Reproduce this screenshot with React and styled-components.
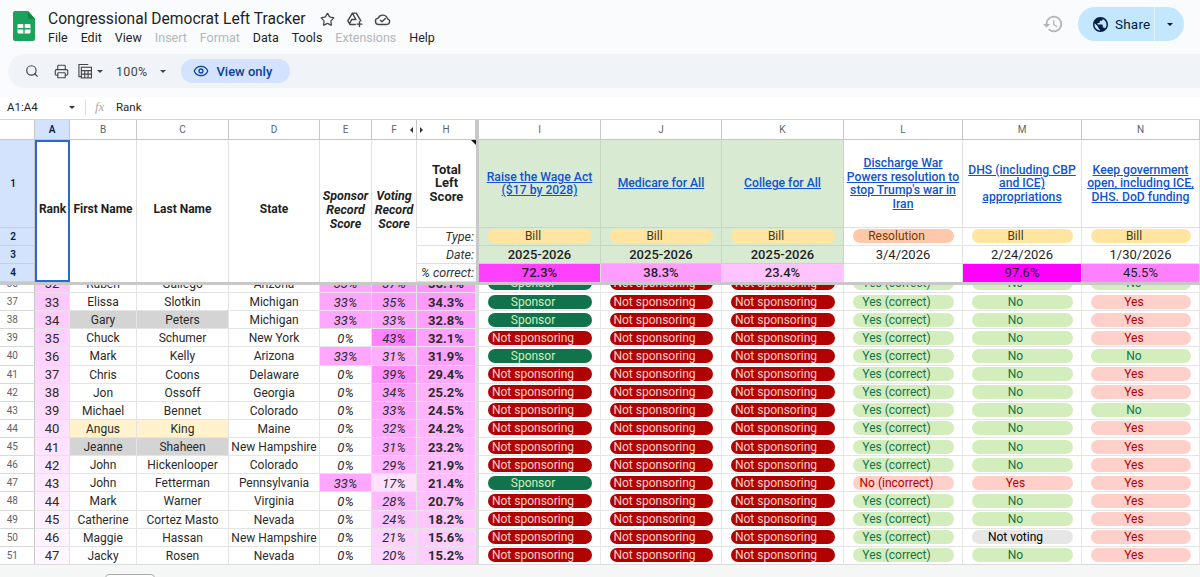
import React from "react";
import styled, { createGlobalStyle } from "styled-components";
import { Search, Printer, Eye, Star } from "lucide-react";

const Global = createGlobalStyle`
  html, body { margin: 0; padding: 0; background: #f9fbfd; }
  body { font-family: "Roboto", "Liberation Sans", sans-serif; }
  * { box-sizing: border-box; }
`;

const COLS = "35px 35px 67px 92px 91px 52px 45px 59px 3px 122px 121px 122px 119px 119px 118px";

const Page = styled.div`
  width: 1200px;
  height: 577px;
  overflow: hidden;
  display: flex;
  flex-direction: column;
  background: #f9fbfd;
`;

const TopBar = styled.header`
  height: 54px;
  display: flex;
  align-items: flex-start;
  padding: 11px 16px 0 13px;
`;
const Logo = styled.svg`
  width: 22px;
  height: 30px;
  flex: none;
  margin-right: 13px;
`;
const TitleBlock = styled.div`
  display: flex;
  flex-direction: column;
  flex: 1;
`;
const TitleRow = styled.div`
  display: flex;
  align-items: center;
  height: 16px;
  color: #1f1f1f;
`;
const Title = styled.div`
  font: 400 15.6px/16px "Roboto", sans-serif;
  margin-right: 15px;
`;
const TitleIcons = styled.div`
  display: flex;
  align-items: center;
  gap: 11px;
  color: #444746;
`;
const Menu = styled.nav`
  display: flex;
  gap: 13px;
  margin-top: 2px;
  font: 400 12.5px/17px "Roboto", sans-serif;
`;
const MenuItem = styled.span`
  color: ${(p) => (p.$off ? "#b3b6ba" : "#1f1f1f")};
`;
const HistoryIcon = styled.svg`
  width: 22px;
  height: 22px;
  fill: #b4b4b4;
  margin: 2px 14px 0 0;
`;
const Share = styled.div`
  width: 106px;
  height: 34px;
  margin-top: -4px;
  border-radius: 17px;
  background: #c2e7ff;
  color: #001d35;
  display: flex;
  align-items: center;
  font: 400 13.5px "Roboto", sans-serif;
  letter-spacing: 0.2px;
`;
const ShareMain = styled.div`
  width: 77px;
  height: 100%;
  display: flex;
  align-items: center;
  gap: 7px;
  padding-left: 15px;
  border-right: 1px solid #e4f4ff;
`;
const ShareCaret = styled.div`
  flex: 1;
  display: flex;
  justify-content: center;
`;
const Caret = styled.span`
  display: inline-block;
  width: 0;
  height: 0;
  border-left: 3.5px solid transparent;
  border-right: 3.5px solid transparent;
  border-top: 3.5px solid ${(p) => p.$c || "#444746"};
`;

const Toolbar = styled.div`
  height: 34px;
  margin-left: 8px;
  background: #f0f4f9;
  border-radius: 17px 0 0 17px;
  display: flex;
  align-items: center;
  color: #444746;
  padding-left: 17px;
`;
const ZoomText = styled.span`
  font: 400 12.5px "Roboto", sans-serif;
  letter-spacing: 0.3px;
  margin: 0 13px 0 6px;
`;
const ViewOnly = styled.div`
  width: 109px;
  height: 24px;
  margin-left: 15px;
  border-radius: 12px;
  background: #d3e3fd;
  color: #0842a0;
  display: flex;
  align-items: center;
  gap: 7px;
  padding-left: 12px;
  font: 500 13px "Roboto", sans-serif;
`;
const Spaced = styled.span`
  display: inline-flex;
  margin-right: ${(p) => p.$mr}px;
`;

const FormulaBar = styled.div`
  height: 22px;
  margin-top: 9px;
  padding-bottom: 2px;
  background: #fff;
  display: flex;
  align-items: center;
  font: 400 11.5px "Roboto", sans-serif;
  color: #1f1f1f;
`;
const NameBox = styled.div`
  width: 86px;
  height: 16px;
  display: flex;
  align-items: center;
  justify-content: space-between;
  padding: 0 10px 0 7px;
  border-right: 1px solid #dfe1e5;
`;
const Fx = styled.span`
  font: italic 400 13px "Liberation Serif", serif;
  color: #a9acaf;
  width: 30px;
  padding-left: 9px;
`;

const Frozen = styled.div`
  display: grid;
  grid-template-columns: ${COLS};
  grid-template-rows: 20px 87.7px 18px 18px 18px;
  background: #fff;
  border-top: 1px solid #d4d4d4;
  flex: none;
`;
const FreezeBarV = styled.div`
  grid-column: 9;
  grid-row: 1 / -1;
  background: #c8c8c8;
`;
const FreezeBarH = styled.div`
  height: 3px;
  background: #c8c8c8;
  flex: none;
`;
const ColHead = styled.div`
  position: relative;
  display: flex;
  align-items: center;
  justify-content: center;
  font: ${(p) => (p.$on ? 600 : 400)} 10px "Roboto", sans-serif;
  color: ${(p) => (p.$on ? "#041e49" : "#5f6368")};
  background: ${(p) => (p.$on ? "#d3e3fd" : "#fff")};
  border-right: 1px solid #c7c7c7;
  border-bottom: 1px solid #c7c7c7;
`;
const Arrow = styled.span`
  position: absolute;
  top: 7px;
  ${(p) => p.$side}: 0;
  width: 0;
  height: 0;
  border-top: 3px solid transparent;
  border-bottom: 3px solid transparent;
  ${(p) => (p.$side === "right" ? "border-right" : "border-left")}: 3px solid #333;
  margin-${(p) => p.$side}: 3px;
`;
const RowHead = styled.div`
  display: flex;
  align-items: center;
  justify-content: flex-end;
  padding-right: 18px;
  font: ${(p) => (p.$on ? 600 : 400)} 10px "Roboto", sans-serif;
  color: ${(p) => (p.$on ? "#041e49" : "#5f6368")};
  background: ${(p) => (p.$on ? "#d3e3fd" : "#fff")};
  border-right: 1px solid #c7c7c7;
  border-bottom: 1px solid ${(p) => (p.$on ? "#c4cfdf" : "#d8d8d8")};
`;
const Merged = styled.div`
  grid-row: span 4;
  display: flex;
  align-items: center;
  justify-content: center;
  text-align: center;
  padding: 0 1px 2px;
  font-size: ${(p) => (p.$it ? 12.5 : 12)}px;
  line-height: 13.7px;
  font-weight: 700;
  font-style: ${(p) => (p.$it ? "italic" : "normal")};
  color: #1f1f1f;
  background: #fff;
  border-right: 1px solid #e0e0e0;
`;
const Selected = styled(Merged)`
  border: 2px solid #2a68d0;
`;
const HeadTotal = styled.div`
  position: relative;
  display: flex;
  align-items: center;
  justify-content: center;
  text-align: center;
  padding: 0 12px;
  font-size: 13px;
  line-height: 13.8px;
  font-weight: 700;
  color: #1f1f1f;
  border-bottom: 1px solid #e0e0e0;
`;
const Notch = styled.span`
  position: absolute;
  top: 0;
  right: 0;
  width: 0;
  height: 0;
  border-top: 5px solid #111;
  border-left: 5px solid transparent;
`;
const Label = styled.div`
  display: flex;
  align-items: center;
  justify-content: flex-end;
  padding-right: 2px;
  font-size: 12.5px;
  font-style: italic;
  color: #333;
  border-bottom: 1px solid #e0e0e0;
`;
const Issue = styled.a`
  display: flex;
  align-items: center;
  justify-content: center;
  text-align: center;
  padding: 2px 2px 0;
  font-size: 12.2px;
  line-height: 13.7px;
  font-weight: 500;
  color: #1155cc;
  text-decoration: underline;
  background: ${(p) => (p.$g ? "#d9ead3" : "#fff")};
  border-right: 1px solid ${(p) => (p.$g ? "#c6d6c1" : "#e0e0e0")};
  border-bottom: 1px solid ${(p) => (p.$g ? "#c6d6c1" : "#e0e0e0")};
`;
const DateCell = styled.div`
  display: flex;
  align-items: center;
  justify-content: center;
  font-size: 13px;
  font-weight: ${(p) => (p.$g ? 500 : 400)};
  color: #1f1f1f;
  background: ${(p) => (p.$g ? "#d9ead3" : "#fff")};
  border-right: 1px solid ${(p) => (p.$g ? "#c6d6c1" : "#e0e0e0")};
  border-bottom: 1px solid ${(p) => (p.$g ? "#c6d6c1" : "#e0e0e0")};
`;
const PctCell = styled.div`
  display: flex;
  align-items: center;
  justify-content: center;
  font-size: 13px;
  font-weight: ${(p) => (p.$b ? 500 : 400)};
  color: #1f1f1f;
  background: ${(p) => p.$bg};
  border-right: 1px solid #e0e0e0;
`;

const ChipCell = styled.div`
  display: flex;
  align-items: center;
  padding: 0 8px 0 9px;
  background: ${(p) => (p.$g ? "#d9ead3" : "#fff")};
  border-right: 1px solid ${(p) => (p.$g ? "#c6d6c1" : "#e8e8e8")};
  border-bottom: 1px solid ${(p) => (p.$g ? "#c6d6c1" : "#e4e4e4")};
`;
const CHIP = {
  sponsor: ["#11734b", "#d4edbc"],
  not: ["#b10202", "#ffcfc9"],
  good: ["#d4edbc", "#11734b"],
  bad: ["#ffcfc9", "#b10202"],
  none: ["#e6e6e6", "#000"],
  bill: ["#ffe5a0", "#473821"],
  res: ["#ffc8aa", "#753800"],
};
const Chip = styled.span`
  flex: 1;
  height: 14px;
  border-radius: 7px;
  padding: 0 14px 0 0;
  display: block;
  text-align: center;
  white-space: nowrap;
  font-size: 12px;
  line-height: 14px;
  background: ${(p) => CHIP[p.$k][0]};
  color: ${(p) => CHIP[p.$k][1]};
`;

const Viewport = styled.div`
  flex: 1;
  min-height: 0;
  overflow: hidden;
  background: #fff;
`;
const BodyGrid = styled.div`
  display: grid;
  grid-template-columns: ${COLS};
  grid-auto-rows: 18.13px;
  margin-top: -9.8px;
`;
const BodyRowHead = styled.div`
  display: flex;
  align-items: center;
  justify-content: flex-end;
  padding-right: 16px;
  font: 400 10px "Roboto", sans-serif;
  color: #5f6368;
  border-right: 1px solid #c7c7c7;
  border-bottom: 1px solid #d8d8d8;
`;
const BodyCell = styled.div`
  display: flex;
  align-items: center;
  justify-content: center;
  white-space: nowrap;
  overflow: hidden;
  font-size: ${(p) => p.$size || 13}px;
  padding-top: 1px;
  color: #2a2a2a;
  font-style: ${(p) => (p.$it ? "italic" : "normal")};
  font-weight: ${(p) => (p.$b ? 700 : 400)};
  background: ${(p) => p.$bg || "#fff"};
  border-right: 1px solid #e4e4e4;
  border-bottom: 1px solid #e4e4e4;
`;
const BodyBar = styled.div`
  background: #dcdcdc;
`;
const Footer = styled.div`
  height: 13px;
  flex: none;
  background: #f5f7f6;
  border-top: 1px solid #dcdcdc;
  padding: 9px 0 0 105px;
`;
const SheetTab = styled.div`
  width: 50px;
  height: 10px;
  border: 1px solid #a8a8a8;
  border-radius: 4px 4px 0 0;
  background: #fff;
`;

const heat = (g) => `rgb(255, ${Math.round(g)}, 255)`;
const rankBg = (r) => heat(198 + (r - 32) * 3.2);
const scoreBg = (v) => (v === 0 ? "#fff" : heat(Math.min(240, 287 - 3.65 * v)));
const totalBg = (v) => heat(150 + (36.1 - v) * 2.7);

const GREY = "#d4d4d4";
const YEL = "#fff2cc";
const ROWS = [
  [36, 32, "Ruben", "Gallego", "Arizona", 33, 37, 36.1, "S", "Y", "No", "No"],
  [37, 33, "Elissa", "Slotkin", "Michigan", 33, 35, 34.3, "S", "Y", "No", "Yes"],
  [38, 34, "Gary", "Peters", "Michigan", 33, 33, 32.8, "S", "Y", "No", "Yes", GREY],
  [39, 35, "Chuck", "Schumer", "New York", 0, 43, 32.1, "N", "Y", "No", "Yes"],
  [40, 36, "Mark", "Kelly", "Arizona", 33, 31, 31.9, "S", "Y", "No", "No"],
  [41, 37, "Chris", "Coons", "Delaware", 0, 39, 29.4, "N", "Y", "No", "Yes"],
  [42, 38, "Jon", "Ossoff", "Georgia", 0, 34, 25.2, "N", "Y", "No", "Yes"],
  [43, 39, "Michael", "Bennet", "Colorado", 0, 33, 24.5, "N", "Y", "No", "No"],
  [44, 40, "Angus", "King", "Maine", 0, 32, 24.2, "N", "Y", "No", "Yes", YEL],
  [45, 41, "Jeanne", "Shaheen", "New Hampshire", 0, 31, 23.2, "N", "Y", "No", "Yes", GREY],
  [46, 42, "John", "Hickenlooper", "Colorado", 0, 29, 21.9, "N", "Y", "No", "Yes"],
  [47, 43, "John", "Fetterman", "Pennsylvania", 33, 17, 21.4, "S", "X", "Yes", "Yes"],
  [48, 44, "Mark", "Warner", "Virginia", 0, 28, 20.7, "N", "Y", "No", "Yes"],
  [49, 45, "Catherine", "Cortez Masto", "Nevada", 0, 24, 18.2, "N", "Y", "No", "Yes"],
  [50, 46, "Maggie", "Hassan", "New Hampshire", 0, 21, 15.6, "N", "Y", "Not voting", "Yes"],
  [51, 47, "Jacky", "Rosen", "Nevada", 0, 20, 15.2, "N", "Y", "No", "Yes"],
];

const voteKind = (v) => (v === "No" ? "good" : v === "Yes" ? "bad" : "none");
const taxKind = (v) => (v === "No" ? "good" : "bad");

const ISSUES = [
  { t: "Raise the Wage Act ($17 by 2028)", g: true, type: "Bill", date: "2025-2026", pct: "72.3%", bg: "#ff40ff", b: true },
  { t: "Medicare for All", g: true, type: "Bill", date: "2025-2026", pct: "38.3%", bg: "#ff9dff", b: true },
  { t: "College for All", g: true, type: "Bill", date: "2025-2026", pct: "23.4%", bg: "#ffc4ff", b: true },
  { t: "Discharge War Powers resolution to stop Trump's war in Iran", type: "Resolution", date: "3/4/2026", pct: "", bg: "#fff" },
  { t: "DHS (including CBP and ICE) appropriations", type: "Bill", date: "2/24/2026", pct: "97.6%", bg: "#ff00ff" },
  { t: "Keep government open, including ICE, DHS. DoD funding", type: "Bill", date: "1/30/2026", pct: "45.5%", bg: "#ff80ff" },
];

const SheetsLogo = () => (
  <Logo viewBox="0 0 22 30">
    <path d="M2 0h13l7 8v20a2 2 0 0 1-2 2H2a2 2 0 0 1-2-2V2a2 2 0 0 1 2-2z" fill="#1aa35c" />
    <path d="M15 0l7 8h-5a2 2 0 0 1-2-2z" fill="#0e8a48" />
    <rect x="4.5" y="13" width="13" height="9.5" rx="1" fill="#fff" />
    <path d="M11 13v9.5M4.5 17.75h13" stroke="#1aa35c" strokeWidth="1.4" />
  </Logo>
);
const DriveIcon = () => (
  <svg width="17" height="17" viewBox="0 0 24 24" fill="none" stroke="#444746" strokeWidth="2" strokeLinejoin="round" strokeLinecap="round">
    <path d="M9 3h5.5L21 14M13 19H5.5L2.5 14 9 3l5 9H8l-3 6" />
    <path d="M19 15v7M15.5 18.5h7" />
  </svg>
);
const CloudDone = () => (
  <svg width="17" height="17" viewBox="0 0 24 24" fill="none" stroke="#444746" strokeWidth="2" strokeLinejoin="round" strokeLinecap="round">
    <path d="M6.5 19a4.5 4.5 0 0 1-.6-8.96 7 7 0 0 1 13.2 1.1A4 4 0 0 1 18 19z" />
    <path d="M9 13l2.3 2.3L16 10.5" />
  </svg>
);
const CalcIcon = () => (
  <svg width="14" height="16" viewBox="0 0 15 16" fill="none" stroke="#444746" strokeWidth="1.2">
    <path d="M11 1H1v13h3" />
    <rect x="3.6" y="4" width="10.8" height="11.4" />
    <path d="M3.6 7.6h10.8M3.6 11.4h10.8M7.2 7.6v7.8M10.8 7.6v7.8" />
  </svg>
);
const GlobeIcon = () => (
  <svg width="15" height="15" viewBox="2 2 20 20" fill="#041e49">
    <path d="M12 2C6.48 2 2 6.48 2 12s4.48 10 10 10 10-4.48 10-10S17.52 2 12 2zm-1 17.93c-3.95-.49-7-3.85-7-7.93 0-.62.08-1.21.21-1.79L9 15v1c0 1.1.9 2 2 2v1.93zm6.9-2.54c-.26-.81-1-1.39-1.9-1.39h-1v-3c0-.55-.45-1-1-1H8v-2h2c.55 0 1-.45 1-1V7h2c1.1 0 2-.9 2-2v-.41c2.93 1.19 5 4.06 5 7.41 0 2.08-.8 3.97-2.1 5.39z" />
  </svg>
);

export default function App() {
  return (
    <Page>
      <Global />
      <TopBar>
        <SheetsLogo />
        <TitleBlock>
          <TitleRow>
            <Title>Congressional Democrat Left Tracker</Title>
            <TitleIcons>
              <Star size={15} strokeWidth={2} />
              <DriveIcon />
              <CloudDone />
            </TitleIcons>
          </TitleRow>
          <Menu>
            {["File", "Edit", "View"].map((m) => <MenuItem key={m}>{m}</MenuItem>)}
            <MenuItem $off>Insert</MenuItem>
            <MenuItem $off>Format</MenuItem>
            <MenuItem>Data</MenuItem>
            <MenuItem>Tools</MenuItem>
            <MenuItem $off>Extensions</MenuItem>
            <MenuItem>Help</MenuItem>
          </Menu>
        </TitleBlock>
        <HistoryIcon viewBox="0 0 24 24">
          <path d="M13 3c-4.97 0-9 4.03-9 9H1l3.89 3.89.07.14L9 12H6c0-3.87 3.13-7 7-7s7 3.13 7 7-3.13 7-7 7c-1.93 0-3.68-.79-4.94-2.06l-1.42 1.42C8.27 19.99 10.51 21 13 21c4.97 0 9-4.03 9-9s-4.03-9-9-9zm-1 5v5l4.28 2.54.72-1.21-3.5-2.08V8H12z" />
        </HistoryIcon>
        <Share>
          <ShareMain><GlobeIcon />Share</ShareMain>
          <ShareCaret><Caret $c="#001d35" /></ShareCaret>
        </Share>
      </TopBar>

      <Toolbar>
        <Spaced $mr={15}><Search size={14} strokeWidth={2} /></Spaced>
        <Spaced $mr={9}><Printer size={15} strokeWidth={1.8} /></Spaced>
        <Spaced $mr={5}><CalcIcon /></Spaced>
        <Spaced $mr={7}><Caret /></Spaced>
        <ZoomText>100%</ZoomText>
        <Caret />
        <ViewOnly><Eye size={16} strokeWidth={1.9} />View only</ViewOnly>
      </Toolbar>

      <FormulaBar>
        <NameBox>A1:A4<Caret $c="#333" /></NameBox>
        <Fx>fx</Fx>
        Rank
      </FormulaBar>

      <Frozen>
        <FreezeBarV />
        <ColHead />
        <ColHead $on>A</ColHead>
        <ColHead>B</ColHead>
        <ColHead>C</ColHead>
        <ColHead>D</ColHead>
        <ColHead>E</ColHead>
        <ColHead>F<Arrow $side="right" /></ColHead>
        <ColHead>H<Arrow $side="left" /></ColHead>
        {["I", "J", "K", "L", "M", "N"].map((c) => <ColHead key={c}>{c}</ColHead>)}

        <RowHead $on>1</RowHead>
        <Selected>Rank</Selected>
        <Merged>First Name</Merged>
        <Merged>Last Name</Merged>
        <Merged>State</Merged>
        <Merged $it>Sponsor Record Score</Merged>
        <Merged $it>Voting Record Score</Merged>
        <HeadTotal>Total Left Score<Notch /></HeadTotal>
        {ISSUES.map((i) => <Issue key={i.t} $g={i.g}>{i.t}</Issue>)}

        <RowHead $on>2</RowHead>
        <Label>Type:</Label>
        {ISSUES.map((i) => (
          <ChipCell key={i.t} $g={i.g}>
            <Chip $k={i.type === "Bill" ? "bill" : "res"}>{i.type}</Chip>
          </ChipCell>
        ))}

        <RowHead $on>3</RowHead>
        <Label>Date:</Label>
        {ISSUES.map((i) => <DateCell key={i.t} $g={i.g}>{i.date}</DateCell>)}

        <RowHead $on>4</RowHead>
        <Label>% correct:</Label>
        {ISSUES.map((i) => <PctCell key={i.t} $bg={i.bg} $b={i.b}>{i.pct}</PctCell>)}
      </Frozen>
      <FreezeBarH />

      <Viewport>
        <BodyGrid>
          {ROWS.map(([n, rank, first, last, state, sp, vo, total, spon, l, m, tax, mark]) => (
            <React.Fragment key={n}>
              <BodyRowHead>{n}</BodyRowHead>
              <BodyCell $bg={rankBg(rank)}>{rank}</BodyCell>
              <BodyCell $size={12} $bg={mark}>{first}</BodyCell>
              <BodyCell $size={12} $bg={mark}>{last}</BodyCell>
              <BodyCell $size={12}>{state}</BodyCell>
              <BodyCell $it $bg={scoreBg(sp)}>{sp}%</BodyCell>
              <BodyCell $it $bg={scoreBg(vo)}>{vo}%</BodyCell>
              <BodyCell $b $bg={totalBg(total)}>{total.toFixed(1)}%</BodyCell>
              <BodyBar />
              <ChipCell>
                <Chip $k={spon === "S" ? "sponsor" : "not"}>{spon === "S" ? "Sponsor" : "Not sponsoring"}</Chip>
              </ChipCell>
              <ChipCell><Chip $k="not">Not sponsoring</Chip></ChipCell>
              <ChipCell><Chip $k="not">Not sponsoring</Chip></ChipCell>
              <ChipCell>
                <Chip $k={l === "Y" ? "good" : "bad"}>{l === "Y" ? "Yes (correct)" : "No (incorrect)"}</Chip>
              </ChipCell>
              <ChipCell><Chip $k={voteKind(m)}>{m}</Chip></ChipCell>
              <ChipCell><Chip $k={taxKind(tax)}>{tax}</Chip></ChipCell>
            </React.Fragment>
          ))}
        </BodyGrid>
      </Viewport>
      <Footer><SheetTab /></Footer>
    </Page>
  );
}
